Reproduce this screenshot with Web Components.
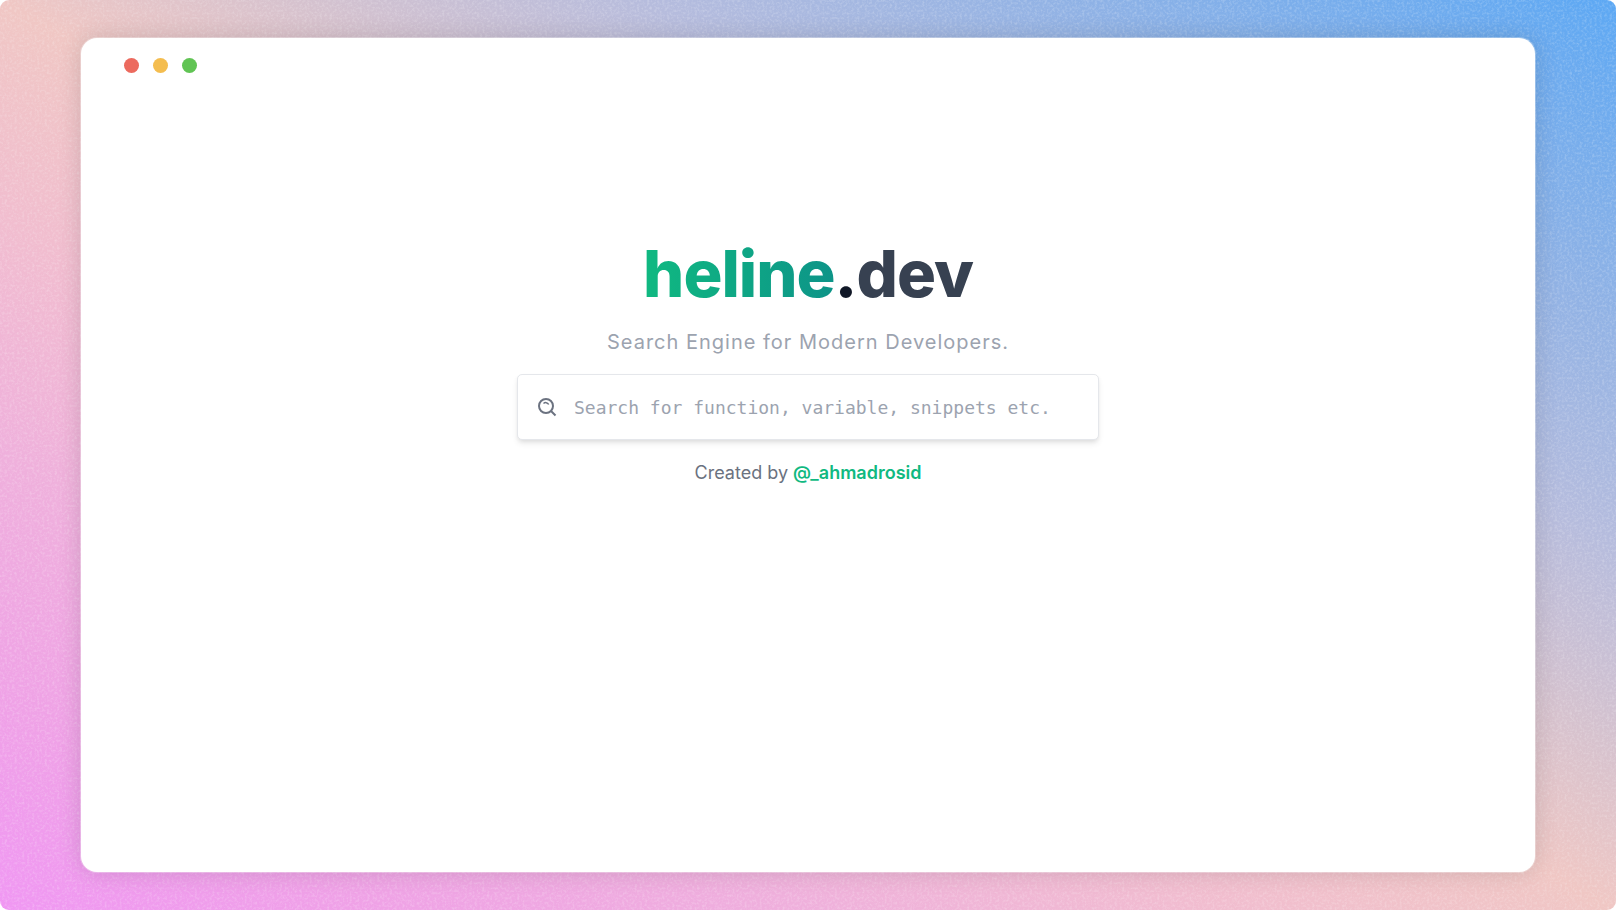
<!DOCTYPE html>
<html lang="en">
<head>
<meta charset="utf-8">
<meta name="viewport" content="width=device-width, initial-scale=1">
<title>heline.dev</title>
<style>
body {
    margin: 0;
    background: white;
    font-family: Inter, "Liberation Sans", sans-serif;
}
</style>
</head>
<body>
<gradient-backdrop>
  <app-window>
    <search-home>
      <brand-title slot="title" name="heline" domain="dev"></brand-title>
      <span slot="tagline">Search Engine for Modern Developers.</span>
      <search-box slot="search" placeholder="Search for function, variable, snippets etc."></search-box>
      <author-credit slot="credit" handle="_ahmadrosid"></author-credit>
    </search-home>
  </app-window>
</gradient-backdrop>

<script>
"use strict";

/* Build a template element from a string of markup. */
function makeTemplate(html) {
    const template = document.createElement('template');
    template.innerHTML = html;
    return template;
}

/* BaseElement attaches an open shadow root holding a copy of the class' template. */
class BaseElement extends HTMLElement {
    constructor () {
        super();
        this.attachShadow({mode: 'open'});
        this.shadowRoot.appendChild(this.constructor.template.content.cloneNode(true));
    }
}

/* GradientBackdrop is the grainy coloured surface behind the window. */
class GradientBackdrop extends BaseElement {
    static template = makeTemplate(`
<style>
:host {
    position: relative;
    display: flex;
    box-sizing: border-box;
    min-height: 100vh;
    padding: 38px 5vw;
    border-radius: 9px;
    overflow: hidden;
    background: linear-gradient(to top right,
        #f097f3 0%, #efa2e6 12%, #efb0dc 25%, #f1bdcf 38%,
        #f0c7c4 50%, #d6c2ce 59%, #b6bcdd 70%, #90b2e5 83%, #5ca8f4 100%);
}
.grain {
    position: absolute;
    inset: 0;
    width: 100%;
    height: 100%;
    opacity: 0.5;
}
::slotted(*) {
    position: relative;
    flex: 1;
}
</style>
<svg class="grain" aria-hidden="true">
  <filter id="grain" x="0" y="0" width="100%" height="100%">
    <feTurbulence type="fractalNoise" baseFrequency="0.4" numOctaves="2" seed="4"></feTurbulence>
    <feColorMatrix values="0 0 0 0 1  0 0 0 0 1  0 0 0 0 1  1 0 0 0 -0.42"></feColorMatrix>
  </filter>
  <rect width="100%" height="100%" filter="url(#grain)"></rect>
</svg>
<slot></slot>
`);
}

/* AppWindow is a window frame with the three round controls. */
class AppWindow extends BaseElement {
    static template = makeTemplate(`
<style>
:host {
    display: flex;
    flex-direction: column;
    border-radius: 16px;
    background: white;
    box-shadow: 0 0 0 1px rgba(255, 255, 255, 0.3), 0 0 24px rgba(0, 0, 0, 0.14);
}
.controls {
    display: flex;
    gap: 14px;
    padding: 20px 43px;
}
button {
    width: 15px;
    height: 15px;
    padding: 0;
    border: 0;
    border-radius: 50%;
}
.close { background: #ec6a5e; }
.minimize { background: #f4bd4f; }
.zoom { background: #61c454; }
</style>
<div class="controls">
  <button class="close" aria-label="Close"></button>
  <button class="minimize" aria-label="Minimize"></button>
  <button class="zoom" aria-label="Zoom"></button>
</div>
<slot></slot>
`);
}

/* SearchHome stacks the title, tagline, search box and credit. */
class SearchHome extends BaseElement {
    static template = makeTemplate(`
<style>
:host {
    display: flex;
    flex-direction: column;
    align-items: center;
    padding: 145px 24px 24px;
}
.tagline {
    margin: 0;
    padding: 16px 0;
    color: #9ca3af;
    font-size: 20px;
    line-height: 32px;
    letter-spacing: 1px;
}
.search {
    width: 100%;
    max-width: 582px;
}
.credit {
    padding-top: 16px;
}
</style>
<slot name="title"></slot>
<p class="tagline"><slot name="tagline"></slot></p>
<div class="search"><slot name="search"></slot></div>
<div class="credit"><slot name="credit"></slot></div>
`);
}

/* BrandTitle draws the site name, with the first part in a green gradient. */
class BrandTitle extends BaseElement {
    static template = makeTemplate(`
<style>
:host {
    display: block;
}
h1 {
    margin: 0;
    color: #111827;
    font-size: 65px;
    font-weight: 800;
    line-height: 72px;
    letter-spacing: -1px;
}
.name {
    background: linear-gradient(to right, #10b981, #0d9488);
    -webkit-background-clip: text;
    background-clip: text;
    color: transparent;
}
.domain {
    color: #374151;
}
</style>
<h1><span class="name"></span>.<span class="domain"></span></h1>
`);

    connectedCallback() {
        this.shadowRoot.querySelector('.name').textContent = this.getAttribute('name');
        this.shadowRoot.querySelector('.domain').textContent = this.getAttribute('domain');
    }
}

/* SearchBox is a text input with a magnifier in front. */
class SearchBox extends BaseElement {
    static template = makeTemplate(`
<style>
:host {
    display: block;
}
form {
    display: flex;
    align-items: center;
    gap: 16px;
    padding: 0 18px;
    border: 1px solid #e5e7eb;
    border-radius: 5px;
    background: white;
    box-shadow: 0 4px 6px -1px rgba(0, 0, 0, 0.1), 0 2px 4px -1px rgba(0, 0, 0, 0.06);
}
label {
    display: flex;
    color: #6b7280;
}
input {
    flex: 1;
    min-width: 0;
    height: 64px;
    padding: 0;
    border: 0;
    outline: none;
    background: transparent;
    color: #374151;
    font-family: "DejaVu Sans Mono", monospace;
    font-size: 18px;
}
input::placeholder {
    color: #9ca3af;
    opacity: 1;
}
</style>
<form role="search">
  <label for="query" aria-label="Search">
    <svg width="22" height="22" viewBox="0 0 22 22" fill="none" stroke="currentColor" stroke-width="2" aria-hidden="true">
      <circle cx="10" cy="10" r="7"></circle>
      <path d="M15 15l4.500 4.500"></path>
      <path d="M7.500 7.500c1.500-1.300 4-1.300 5.200 1" stroke-width="1.500"></path>
    </svg>
  </label>
  <input id="query" name="query" type="text" autocomplete="off">
</form>
`);

    connectedCallback() {
        this.input = this.shadowRoot.getElementById('query');
        this.input.placeholder = this.getAttribute('placeholder');
        this.shadowRoot.querySelector('form').addEventListener('submit', this.onSubmit);
    }

    onSubmit(evt) {
        evt.preventDefault();
    }
}

/* AuthorCredit links to the profile of the author. */
class AuthorCredit extends BaseElement {
    static template = makeTemplate(`
<style>
:host {
    display: block;
    color: #6b7280;
    font-size: 18px;
    line-height: 34px;
}
a {
    color: #10b981;
    font-weight: 600;
    text-decoration: none;
}
</style>
Created by <a></a>
`);

    connectedCallback() {
        let handle = this.getAttribute('handle'),
            link = this.shadowRoot.querySelector('a');

        link.href = '#' + handle;
        link.textContent = '@' + handle;
    }
}

window.customElements.define('gradient-backdrop', GradientBackdrop);
window.customElements.define('app-window', AppWindow);
window.customElements.define('search-home', SearchHome);
window.customElements.define('brand-title', BrandTitle);
window.customElements.define('search-box', SearchBox);
window.customElements.define('author-credit', AuthorCredit);
</script>
</body>
</html>
